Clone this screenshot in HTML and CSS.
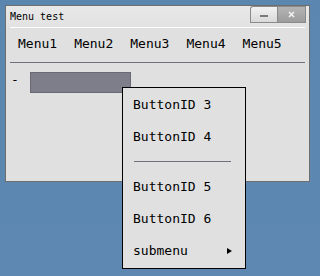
FILE: index.html
```html
<!DOCTYPE html>
<html lang="en">
<head>
  <meta charset="UTF-8">
  <title>Menu test</title>
  <link rel="stylesheet" href="styles.css">
</head>
<body>

<div class="window">
  <div class="titlebar">
    <span class="title">Menu test</span>
    <div class="controls">
      <span class="btn btn-min"><span class="min-bar"></span></span>
      <span class="btn btn-close">
        <svg width="7" height="7" viewBox="0 0 7 7"><path d="M1 1 L6 6 M6 1 L1 6" stroke="#f2f2f2" stroke-width="1.6"/></svg>
      </span>
    </div>
  </div>
  <div class="title-rule"></div>

  <nav class="menubar">
    <span>Menu1</span>
    <span>Menu2</span>
    <span>Menu3</span>
    <span>Menu4</span>
    <span>Menu5</span>
  </nav>
  <div class="menu-rule"></div>

  <div class="content">
    <span class="dash">-</span>
    <div class="bar"></div>
  </div>
</div>

<!-- Popup menu -->
<div class="popup">
  <div class="item">ButtonID 3</div>
  <div class="item">ButtonID 4</div>
  <div class="separator"></div>
  <div class="item">ButtonID 5</div>
  <div class="item">ButtonID 6</div>
  <div class="item submenu">submenu <span class="arrow"></span></div>
</div>

</body>
</html>
```

FILE: styles.css
```css
/* Basic styling */
body {
  margin: 0;
  padding: 0;
  height: 276px;
  background: linear-gradient(#5a86b0, #5e88b1);
  font-family: 'DejaVu Sans Mono', monospace;
  color: #000;
  overflow: hidden;
}
.window {
  margin: 5px 0 0 5px;
  width: 303px;
  height: 175px;
  border: 1px solid #6e6e6e;
  background-color: #e0e0e0;
}
.titlebar {
  display: flex;
  justify-content: space-between;
  height: 21px;
  background: linear-gradient(#e8e8e8, #e2e2e2);
}
.title {
  padding-left: 4px;
  font-size: 10px;
  line-height: 21px;
}
.controls {
  display: flex;
  height: 16px;
  margin-right: 3px;
}
.btn {
  width: 26px;
  height: 15px;
  border: 1px solid #8a8a8a;
  display: flex;
  align-items: center;
  justify-content: center;
}
.btn-min {
  border-right: none;
  border-radius: 3px 0 0 0;
  background: linear-gradient(#f2f2f2, #d9d9d9);
}
.min-bar {
  width: 8px;
  height: 2px;
  margin-top: 3px;
  background-color: #7a7a7a;
}
.btn-close {
  width: 27px;
  background: linear-gradient(#b4b4b4, #9c9c9c);
}
.title-rule {
  height: 1px;
  margin: 0 4px;
  background-color: #fff;
}
.menubar {
  display: flex;
  gap: 17px;
  padding-left: 12px;
  height: 34px;
  font-size: 13px;
  line-height: 32px;
}
.menu-rule {
  height: 1px;
  margin: 0 4px;
  background-color: #70707e;
}
.content {
  display: flex;
  padding: 9px 0 0 5px;
}
.dash {
  font-size: 13px;
  line-height: 15px;
}
.bar {
  width: 99px;
  height: 19px;
  margin-left: 11px;
  background-color: #7e7e8a;
  border: 1px solid #6a6a76;
}

/* Popup menu */
.popup {
  position: absolute;
  left: 122px;
  top: 87px;
  width: 122px;
  padding: 1px 0;
  border: 1px solid #000;
  background-color: #e0e0e0;
  font-size: 13px;
}
.item {
  height: 32px;
  line-height: 32px;
  padding: 0 13px 0 10px;
}
.submenu {
  display: flex;
  justify-content: space-between;
  align-items: center;
}
.arrow {
  width: 0;
  height: 0;
  margin-top: -1px;
  border-left: 5px solid #000;
  border-top: 3px solid transparent;
  border-bottom: 3px solid transparent;
}
.separator {
  height: 1px;
  margin: 8px 14px 9px 11px;
  background-color: #70707e;
}
```
